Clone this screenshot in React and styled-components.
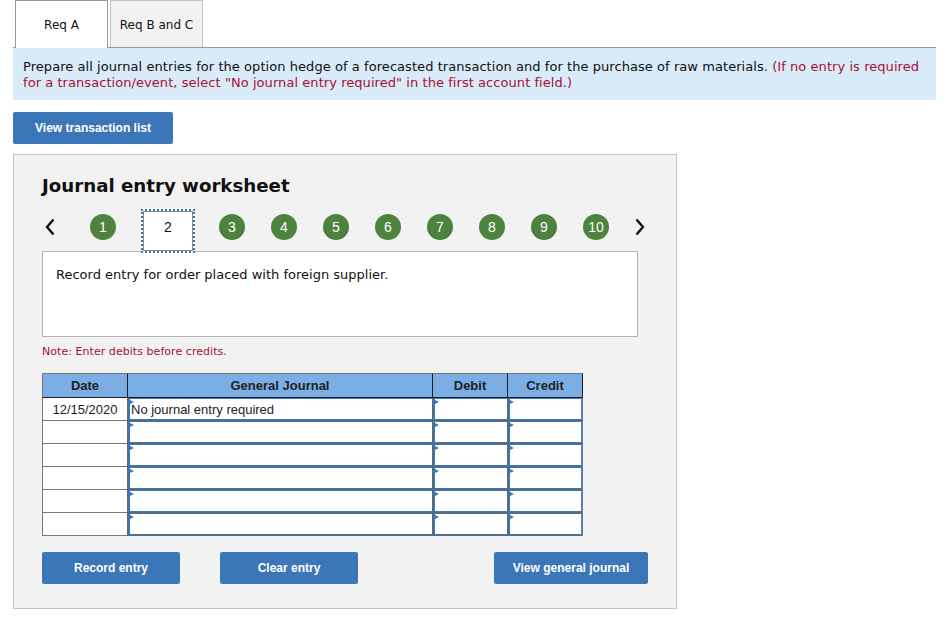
import React from "react";
import styled, { createGlobalStyle } from "styled-components";

const Global = createGlobalStyle`
  html, body { margin: 0; padding: 0; background: #fff; }
  body { font-family: "DejaVu Sans", Verdana, sans-serif; color: #111; }
`;
const Page = styled.div`
  width: 923px;
  padding-left: 13px;
`;
const Tabs = styled.div`
  display: flex;
  gap: 2px;
  padding-left: 2px;
  height: 48px;
  box-sizing: border-box;
  border-bottom: 1px solid #999;
`;
const Tab = styled.div`
  width: 93px;
  height: ${p => (p.$active ? "48px" : "47px")};
  box-sizing: border-box;
  display: flex;
  align-items: center;
  justify-content: center;
  font-size: 12px;
  padding-top: ${p => (p.$active ? "0" : "1px")};
  background: ${p => (p.$active ? "#fff" : "#f2f2f2")};
  border: 1px solid ${p => (p.$active ? "#999" : "#c4c4c4")};
  border-bottom: none;
`;
const Instruction = styled.div`
  background: #d9ebf9;
  height: 52px;
  box-sizing: border-box;
  padding: 11px 10px 0;
  font-size: 13px;
  letter-spacing: 0.06px;
  line-height: 16px;
  white-space: nowrap;
`;
const Red = styled.span`
  color: #a80f33;
`;
const Button = styled.button`
  display: block;
  flex: none;
  width: ${p => p.$w}px;
  height: 32px;
  padding: 0;
  border: 0;
  border-radius: 2px;
  background: #3b76b9;
  color: #fff;
  font: bold 12px "Liberation Sans", Arial, sans-serif;
`;
const TopAction = styled.div`
  padding: 12px 0 10px;
`;
const Panel = styled.div`
  width: 664px;
  height: 455px;
  box-sizing: border-box;
  background: #f2f2f2;
  border: 1px solid #c4c4c4;
  padding: 20px 28px 0;
`;
const Title = styled.h2`
  margin: 0;
  font-size: 18.2px;
  line-height: 22px;
  font-weight: bold;
  color: #111;
`;
const Steps = styled.div`
  display: flex;
  align-items: center;
  height: 42px;
  margin-top: 9px;
  padding-left: 2px;
`;
const Chevron = styled.svg`
  width: 12px;
  height: 18px;
  flex: none;
  fill: none;
  stroke: #111;
  stroke-width: 2.4;
`;
const StepList = styled.div`
  display: flex;
  align-items: center;
  margin-left: 34px;
  margin-right: 25px;
`;
const Step = styled.div`
  width: 26px;
  height: 26px;
  border-radius: 50%;
  background: #4d833f;
  color: #fff;
  font: 14px/26px "Liberation Sans", Arial, sans-serif;
  text-align: center;
  flex: none;
  margin-right: ${p => p.$gap}px;
`;
const CurrentStep = styled.div`
  width: 54px;
  height: 44px;
  box-sizing: border-box;
  background: #fff;
  border: 2px dotted #3b76b9;
  outline: 1px solid #888;
  outline-offset: -3px;
  color: #111;
  font: 14px/32px "Liberation Sans", Arial, sans-serif;
  text-align: center;
  margin-right: 24px;
  margin-left: 25px;
  flex: none;
  transform: translateY(4px);
  position: relative;
  z-index: 1;
`;
const Description = styled.div`
  width: 596px;
  height: 86px;
  margin-top: 3px;
  box-sizing: border-box;
  border: 1px solid #b5b5b5;
  background: #fff;
  padding: 14px 13px;
  font-size: 13px;
  line-height: 18px;
`;
const Note = styled.div`
  margin-top: 8px;
  color: #a80f33;
  font-size: 11px;
  letter-spacing: 0.05px;
  line-height: 14px;
`;
const Sheet = styled.div`
  display: grid;
  grid-template-columns: 85px 305px 75px 76px;
  grid-auto-rows: 23px;
  grid-template-rows: 25px;
  width: 541px;
  margin-top: 14px;
  font-family: "Liberation Sans", Arial, sans-serif;
  font-size: 13px;
`;
const Head = styled.div`
  background: #7aaee5;
  color: #222;
  font-weight: bold;
  font-size: 13px;
  text-align: center;
  line-height: 23px;
  box-sizing: border-box;
  border-top: 1px solid #777;
  border-bottom: 1px solid #1d1d1d;
  border-left: 1px solid ${p => (p.$first ? "#777" : "#1d1d1d")};
  border-right: ${p => (p.$last ? "1px solid #1d1d1d" : "none")};
`;
const DateCell = styled.div`
  background: #fff;
  box-sizing: border-box;
  border-left: 1px solid #777;
  border-bottom: 1px solid #777;
  line-height: 23px;
  text-align: center;
  color: #222;
`;
const Field = styled.div`
  position: relative;
  background: #fff;
  box-sizing: border-box;
  border-left: 1px solid #666;
  border-right: ${p => (p.$last ? "2px solid #5a7ea8" : "none")};
  border-bottom: 1px solid #666;
  box-shadow: inset 2px 0 0 #3b76b9, inset 0 1px 0 #3b76b9, inset 0 -1px 0 #3b76b9;
  padding-left: 3px;
  line-height: 23px;
  color: #222;
  white-space: nowrap;
  &::after {
    content: "";
    position: absolute;
    left: 0;
    top: 1px;
    border-left: 6px solid #3b76b9;
    border-top: 3px solid transparent;
    border-bottom: 3px solid transparent;
  }
`;
const Actions = styled.div`
  display: flex;
  margin-top: 16px;
`;
const Spacer = styled.div`
  width: ${p => p.$w}px;
  flex: none;
`;

const rows = [0, 1, 2, 3, 4, 5];

export default function App() {
  return (
    <Page>
      <Global />
      <Tabs>
        <Tab $active>Req A</Tab>
        <Tab>Req B and C</Tab>
      </Tabs>
      <Instruction>
        Prepare all journal entries for the option hedge of a forecasted transaction and for the purchase of raw materials. <Red>(If no entry is required</Red>
        <br />
        <Red>for a transaction/event, select "No journal entry required" in the first account field.)</Red>
      </Instruction>
      <TopAction>
        <Button $w={160}>View transaction list</Button>
      </TopAction>
      <Panel>
        <Title>Journal entry worksheet</Title>
        <Steps>
          <Chevron viewBox="0 0 12 18"><path d="M9.5 1.5 L3 9 L9.5 16.5" /></Chevron>
          <StepList>
            <Step $gap={0}>1</Step>
            <CurrentStep>2</CurrentStep>
            {[3, 4, 5, 6, 7, 8, 9].map(n => <Step key={n} $gap={26}>{n}</Step>)}
            <Step $gap={0}>10</Step>
          </StepList>
          <Chevron viewBox="0 0 12 18"><path d="M2.5 1.5 L9 9 L2.5 16.5" /></Chevron>
        </Steps>
        <Description>Record entry for order placed with foreign supplier.</Description>
        <Note>Note: Enter debits before credits.</Note>
        <Sheet>
          <Head $first>Date</Head>
          <Head>General Journal</Head>
          <Head>Debit</Head>
          <Head $last>Credit</Head>
          {rows.map(r => (
            <React.Fragment key={r}>
              <DateCell>{r === 0 ? "12/15/2020" : ""}</DateCell>
              <Field>{r === 0 ? "No journal entry required" : ""}</Field>
              <Field />
              <Field $last />
            </React.Fragment>
          ))}
        </Sheet>
        <Actions>
          <Button $w={138}>Record entry</Button>
          <Spacer $w={40} />
          <Button $w={138}>Clear entry</Button>
          <Spacer $w={136} />
          <Button $w={154}>View general journal</Button>
        </Actions>
      </Panel>
    </Page>
  );
}
